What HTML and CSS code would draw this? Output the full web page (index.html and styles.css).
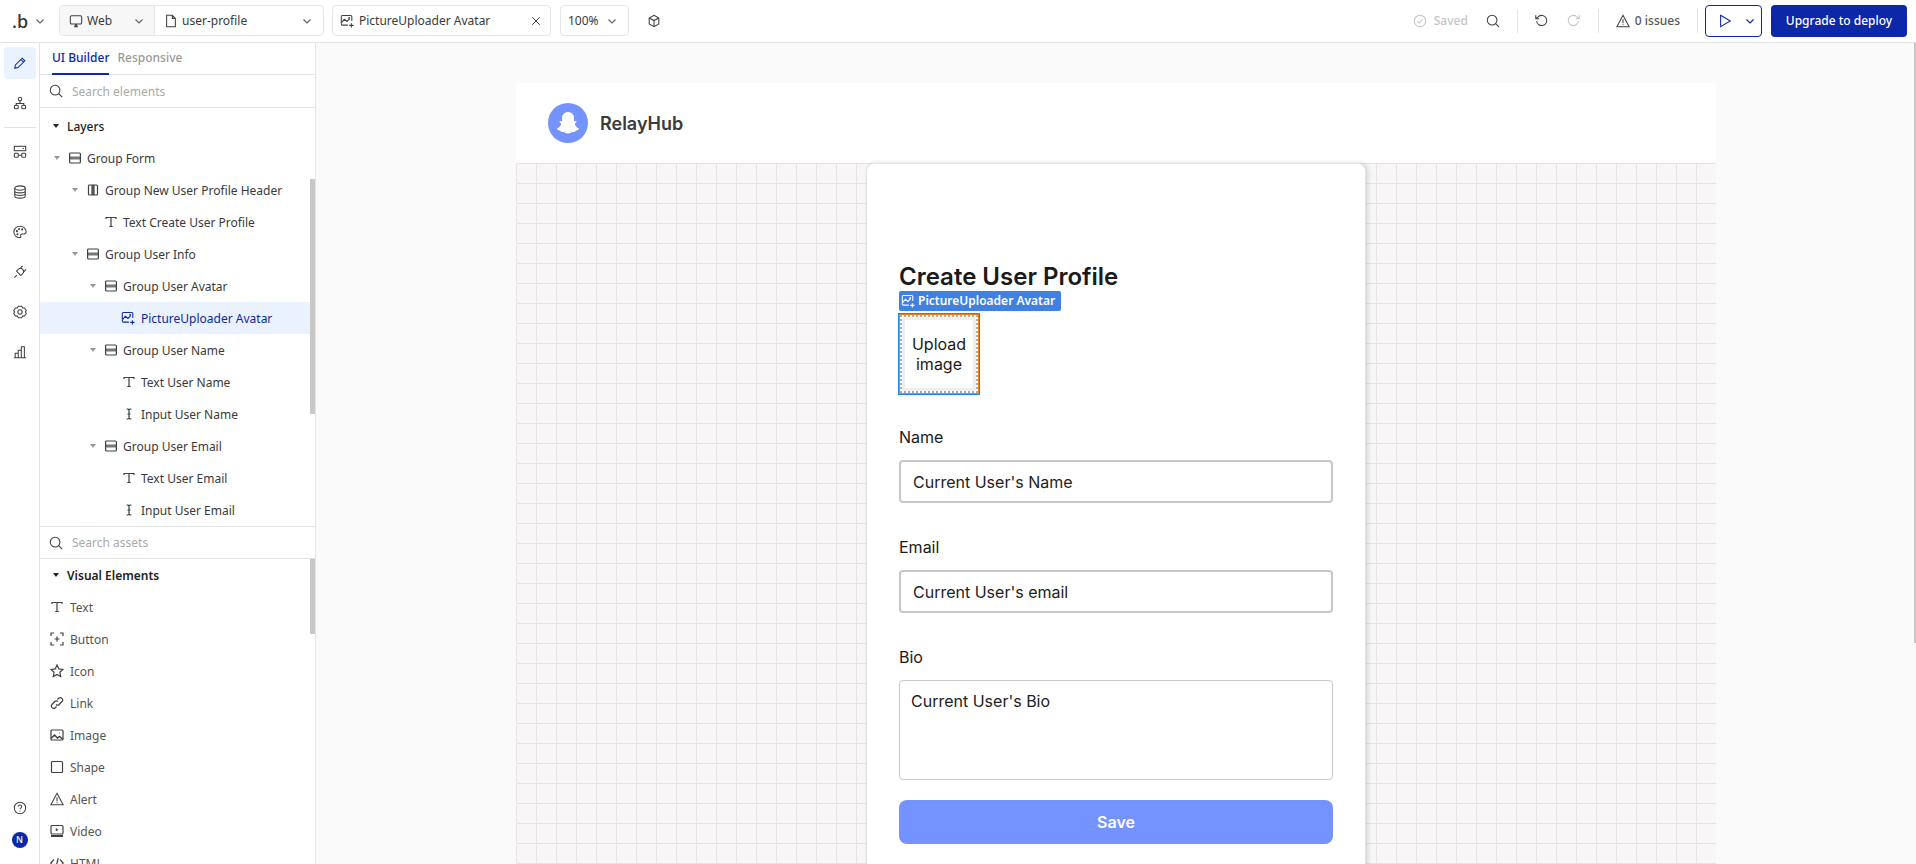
FILE: index.html
```html
<!DOCTYPE html>
<html lang="en">
<head>
  <meta charset="UTF-8" />
  <title>user-profile</title>
  <link rel="stylesheet" href="styles.css">
</head>
<body>
  <svg class="defs" width="0" height="0">
    <symbol id="i-chev" viewBox="0 0 10 10"><path d="M1.5 3.5 5 7l3.5-3.5" /></symbol>
    <symbol id="i-x" viewBox="0 0 12 12"><path d="M1.5 1.5l9 9M10.5 1.5l-9 9" /></symbol>
    <symbol id="i-monitor" viewBox="0 0 16 16"><rect x="1.5" y="2" width="13" height="9.5" rx="1.5" /><path d="M6 14h4M8 11.5V14" stroke-width="2" /></symbol>
    <symbol id="i-file" viewBox="0 0 16 16"><path d="M3 1.5h6.5L13 5v9.5H3zM9.5 1.500V5H13" /></symbol>
    <symbol id="i-upl" viewBox="0 0 16 16"><path d="M13.5 8V3a1.2 1.2 0 0 0-1.2-1.2H2.700A1.2 1.2 0 0 0 1.500 3v8.500a1.200 1.200 0 0 0 1.200 1.200H9" /><path d="M2 9.5l3-3.5 3 2.5 3-3" /><circle cx="10.5" cy="4.5" r=".5" /><path d="M13 10.5v5M10.5 13h5" /></symbol>
    <symbol id="i-cube" viewBox="0 0 16 16"><path d="M8 1.5l5.5 3v7L8 14.5l-5.5-3v-7zM2.500 4.500 8 7.500l5.500-3M8 7.500v7" /></symbol>
    <symbol id="i-search" viewBox="0 0 16 16"><circle cx="7" cy="7" r="5.5" /><path d="M11 11l4 4" /></symbol>
    <symbol id="i-check" viewBox="0 0 16 16"><circle cx="8" cy="8" r="6.5" /><path d="M5 8.2l2.2 2.2L11 6" /></symbol>
    <symbol id="i-undo" viewBox="0 0 16 16"><path d="M3 8a5.8 5.8 0 1 0 2-5L2 5.500M2 1.500v4h4" /></symbol>
    <symbol id="i-redo" viewBox="0 0 16 16"><path d="M13 8a5.8 5.8 0 1 1-2-5l3 2.500M14 1.500v4h-4" /></symbol>
    <symbol id="i-warn" viewBox="0 0 16 16"><path d="M8 1.5 15 14.500H1zM8 6v4.500M8 11.700v1.200" /></symbol>
    <symbol id="i-play" viewBox="0 0 16 16"><path d="M3 1.5 14 8 3 14.500z" /></symbol>
    <symbol id="i-pen" viewBox="0 0 16 16"><path d="M2 14l.8-3.800L10.500 2.500l3 3-7.700 7.700zM9 4l3 3" /></symbol>
    <symbol id="i-tree" viewBox="0 0 16 16"><circle cx="8" cy="3.5" r="2" /><rect x="1.5" y="10.5" width="4.5" height="4" rx="1.5" /><rect x="10" y="10.5" width="4.5" height="4" rx="1.5" /><path d="M8 5.500v3M3.700 10.500V8.500h8.600v2" /></symbol>
    <symbol id="i-layout" viewBox="0 0 16 16"><rect x="1.5" y="1.5" width="13" height="5" /><path d="M11 4h1.500" /><rect x="1.5" y="9.5" width="4.5" height="4.5" rx="1" /><rect x="10" y="9.5" width="4.5" height="4.5" rx="1" /><path d="M6 11.700h4" /></symbol>
    <symbol id="i-db" viewBox="0 0 16 16"><ellipse cx="8" cy="3.5" rx="6" ry="2.5" /><path d="M2 3.500v9C2 14 4.700 15 8 15s6-1 6-2.500v-9M2 6.500C2 8 4.700 9 8 9s6-1 6-2.500M2 9.500C2 11 4.700 12 8 12s6-1 6-2.500" /></symbol>
    <symbol id="i-palette" viewBox="0 0 16 16"><path d="M8 1.5C4 1.500 1 4.300 1 8s3 6.500 6.500 6.500c1.500 0 1.800-1 1.300-2-.5-1.200.2-2.200 1.500-2.200h2.200c1.500 0 2.500-1 2.500-2.500C15 4.300 12 1.500 8 1.500z" /><circle cx="4.5" cy="7" r=".6" /><circle cx="7" cy="4.5" r=".6" /><circle cx="10.5" cy="5" r=".6" /><circle cx="5" cy="10.5" r=".6" /></symbol>
    <symbol id="i-plug" viewBox="0 0 16 16"><path d="M1.5 14.500l3-3M4 7l5 5 2-2c1.500-1.500 1.500-3.500 0-5s-3.500-1.500-5 0zM8.500 3.500 11 1M12.500 7.500 15 5" /></symbol>
    <symbol id="i-gear" viewBox="0 0 16 16"><path d="M6 1.500h4l1 1.800 2.200.1 2 3.100L14.100 8l1.100 1.500-2 3.100-2.200.1-1 1.800H6l-1-1.800-2.200-.1-2-3.100L1.900 8 .8 6.500l2-3.100 2.200-.1z" /><circle cx="8" cy="8" r="2.5" /></symbol>
    <symbol id="i-chart" viewBox="0 0 16 16"><path d="M1 14.500h14M2.500 14.500V9.500H6v5M6 14.500V6h3.500v8.500M9.500 14.500V2H13v12.500" /></symbol>
    <symbol id="i-help" viewBox="0 0 16 16"><circle cx="8" cy="8" r="6.5" /><path d="M6 6.300C6 5 7 4.500 8 4.500s2 .7 2 1.800c0 1.500-2 1.500-2 3.200M8 11v1" /></symbol>
    <symbol id="i-stack" viewBox="0 0 12 12"><rect class="fill-soft" x="1" y="4.500" width="10" height="3" /><rect x=".6" y="1" width="10.800" height="10" rx="1" /></symbol>
    <symbol id="i-cols" viewBox="0 0 12 12"><rect class="fill-soft" x="5" y="1" width="2" height="10" /><rect x="1.5" y="1" width="9" height="10" rx="1" /><path d="M5 1v10M7 1v10" /></symbol>
    <symbol id="i-text" viewBox="0 0 12 12"><path d="M1 3V1.500h10V3M6 1.500v9M4.300 10.500h3.400" /></symbol>
    <symbol id="i-input" viewBox="0 0 12 12"><path d="M3.500 1H5l1 1 1-1h1.500M3.500 11H5l1-1 1 1h1.500M6 2v8M4.500 6h3" /></symbol>
    <symbol id="i-btn" viewBox="0 0 14 14"><path d="M1 4V1h3M10 1h3v3M13 10v3h-3M4 13H1v-3M7 4.500v5M4.500 7h5" /></symbol>
    <symbol id="i-star" viewBox="0 0 14 14"><path d="M7 1l1.800 3.900 4.200.5-3.100 2.900.8 4.200L7 10.400l-3.700 2.100.8-4.200L1 5.400l4.200-.5z" /></symbol>
    <symbol id="i-link" viewBox="0 0 14 14"><path d="M6 8.500a2.200 2.200 0 0 0 3.200 0l2.800-3a2.300 2.300 0 0 0-3.300-3.200L7.500 3.500M8 5.500a2.200 2.200 0 0 0-3.200 0l-2.800 3a2.300 2.300 0 0 0 3.300 3.200l1.200-1.200" /></symbol>
    <symbol id="i-image" viewBox="0 0 14 14"><rect x="1" y="2" width="12" height="10" rx="1" /><path d="M1 10.500l3.500-3.500 3 3 2-1.500 3.500 3M9.500 5h.5" stroke-width="1.500" /></symbol>
    <symbol id="i-shape" viewBox="0 0 14 14"><rect x="1.5" y="1.5" width="11" height="11" rx="1" /></symbol>
    <symbol id="i-video" viewBox="0 0 14 14"><rect x="1" y="1.5" width="12" height="8.5" rx="1" /><path d="M1 12h12" stroke-width="2" /><path class="fill-ink" d="M5.800 4l2.700 1.700-2.700 1.700z" /></symbol>
    <symbol id="i-code" viewBox="0 0 14 14"><path d="M4 3.500.8 7 4 10.500M10 3.500 13.200 7 10 10.500M8.200 2 5.800 12" /></symbol>
  </svg>

  <header class="topbar">
    <div class="brand"><span class="brand-mark">.b</span><svg class="ico chev"><use href="#i-chev" /></svg></div>
    <div class="box page-picker">
      <div class="device"><svg class="ico i14"><use href="#i-monitor" /></svg><span>Web</span><svg class="ico chev push"><use href="#i-chev" /></svg></div>
      <div class="page-name"><svg class="ico i14"><use href="#i-file" /></svg><span>user-profile</span><svg class="ico chev push"><use href="#i-chev" /></svg></div>
    </div>
    <div class="box element-picker"><svg class="ico i14"><use href="#i-upl" /></svg><span>PictureUploader Avatar</span><svg class="ico i10 push"><use href="#i-x" /></svg></div>
    <div class="box zoom-picker"><span>100%</span><svg class="ico chev push"><use href="#i-chev" /></svg></div>
    <svg class="ico i14 cube"><use href="#i-cube" /></svg>

    <div class="top-right">
      <svg class="ico i14 muted"><use href="#i-check" /></svg>
      <span class="saved">Saved</span>
      <svg class="ico i14 top-search"><use href="#i-search" /></svg>
      <i class="vline first"></i>
      <svg class="ico i14"><use href="#i-undo" /></svg>
      <svg class="ico i14 muted redo"><use href="#i-redo" /></svg>
      <i class="vline"></i>
      <svg class="ico i14"><use href="#i-warn" /></svg>
      <span class="issues">0 issues</span>
      <i class="vline"></i>
      <div class="run"><svg class="ico i14"><use href="#i-play" /></svg><svg class="ico chev"><use href="#i-chev" /></svg></div>
      <button class="deploy">Upgrade to deploy</button>
    </div>
  </header>

  <div class="editor">
    <nav class="rail">
      <div class="rail-item active"><svg class="ico i14"><use href="#i-pen" /></svg></div>
      <div class="rail-item"><svg class="ico i14"><use href="#i-tree" /></svg></div>
      <hr class="rail-sep">
      <div class="rail-item tight"><svg class="ico i14"><use href="#i-layout" /></svg></div>
      <div class="rail-item tight"><svg class="ico i14"><use href="#i-db" /></svg></div>
      <div class="rail-item tight"><svg class="ico i14"><use href="#i-palette" /></svg></div>
      <div class="rail-item tight"><svg class="ico i14"><use href="#i-plug" /></svg></div>
      <div class="rail-item tight"><svg class="ico i14"><use href="#i-gear" /></svg></div>
      <div class="rail-item tight"><svg class="ico i14"><use href="#i-chart" /></svg></div>
      <div class="rail-bottom">
        <svg class="ico i14"><use href="#i-help" /></svg>
        <span class="avatar">N</span>
      </div>
    </nav>

    <aside class="panel">
      <div class="tabs">
        <span class="tab on">UI Builder</span>
        <span class="tab">Responsive</span>
      </div>
      <div class="search"><svg class="ico i14"><use href="#i-search" /></svg><span>Search elements</span></div>

      <div class="layers">
        <div class="thumb thumb-layers"></div>
        <div class="row head"><i class="caret dark"></i>Layers</div>
        <div class="row d0"><i class="caret"></i><svg class="ico i12"><use href="#i-stack" /></svg>Group Form</div>
        <div class="row d1"><i class="caret"></i><svg class="ico i12"><use href="#i-cols" /></svg>Group New User Profile Header</div>
        <div class="row d2"><i class="caret none"></i><svg class="ico i12"><use href="#i-text" /></svg>Text Create User Profile</div>
        <div class="row d1"><i class="caret"></i><svg class="ico i12"><use href="#i-stack" /></svg>Group User Info</div>
        <div class="row d2"><i class="caret"></i><svg class="ico i12"><use href="#i-stack" /></svg>Group User Avatar</div>
        <div class="row d3 selected"><i class="caret none"></i><svg class="ico i14"><use href="#i-upl" /></svg>PictureUploader Avatar</div>
        <div class="row d2"><i class="caret"></i><svg class="ico i12"><use href="#i-stack" /></svg>Group User Name</div>
        <div class="row d3"><i class="caret none"></i><svg class="ico i12"><use href="#i-text" /></svg>Text User Name</div>
        <div class="row d3"><i class="caret none"></i><svg class="ico i12"><use href="#i-input" /></svg>Input User Name</div>
        <div class="row d2"><i class="caret"></i><svg class="ico i12"><use href="#i-stack" /></svg>Group User Email</div>
        <div class="row d3"><i class="caret none"></i><svg class="ico i12"><use href="#i-text" /></svg>Text User Email</div>
        <div class="row d3"><i class="caret none"></i><svg class="ico i12"><use href="#i-input" /></svg>Input User Email</div>
      </div>

      <div class="search assets-search"><svg class="ico i14"><use href="#i-search" /></svg><span>Search assets</span></div>

      <div class="assets">
        <div class="thumb thumb-assets"></div>
        <div class="row head strong"><i class="caret dark"></i>Visual Elements</div>
        <div class="asset"><svg class="ico i12"><use href="#i-text" /></svg>Text</div>
        <div class="asset"><svg class="ico i14"><use href="#i-btn" /></svg>Button</div>
        <div class="asset"><svg class="ico i14"><use href="#i-star" /></svg>Icon</div>
        <div class="asset"><svg class="ico i14"><use href="#i-link" /></svg>Link</div>
        <div class="asset"><svg class="ico i14"><use href="#i-image" /></svg>Image</div>
        <div class="asset"><svg class="ico i14"><use href="#i-shape" /></svg>Shape</div>
        <div class="asset"><svg class="ico i14"><use href="#i-warn" /></svg>Alert</div>
        <div class="asset"><svg class="ico i14"><use href="#i-video" /></svg>Video</div>
        <div class="asset"><svg class="ico i14"><use href="#i-code" /></svg>HTML</div>
      </div>
    </aside>

    <main class="canvas">
      <div class="canvas-thumb"></div>
      <div class="app">
        <div class="app-header">
          <svg class="logo" viewBox="0 0 40 40">
            <circle cx="20" cy="20" r="20" fill="#7593ff" />
            <path fill="#fff" d="M20 9C24 9 26 12 26 15L26 18C27 18.5 28 18 28.5 18.5C29 19.5 27 20 26.8 20.8C27 22.5 29 25 31 25.500C31 27 29 27.5 27.5 27.7C27 29 26.5 29 25 29C23 29 22.5 30.5 20 30.5C17.5 30.5 17 29 15 29C13.5 29 13 29 12.5 27.7C11 27.5 9 27 9 25.5C11 25 13 22.5 13.2 20.8C13 20 11 19.5 11.5 18.5C12 18 13 18.5 14 18L14 15C14 12 16 9 20 9Z" />
          </svg>
          <span class="app-name">RelayHub</span>
        </div>
        <div class="app-body">
          <form class="card">
            <h1 class="card-title">Create User Profile</h1>
            <div class="uploader">
              <div class="uploader-tag"><svg class="ico i14"><use href="#i-upl" /></svg>PictureUploader Avatar</div>
              <div class="uploader-inner">Upload image</div>
            </div>
            <label class="field-label" for="userName">Name</label>
            <input class="field" id="userName" type="text" value="Current User's Name" />
            <label class="field-label" for="userEmail">Email</label>
            <input class="field" id="userEmail" type="text" value="Current User's email" />
            <label class="field-label" for="userBio">Bio</label>
            <textarea class="field-area" id="userBio">Current User's Bio</textarea>
            <button class="save" type="button">Save</button>
          </form>
        </div>
      </div>
    </main>
  </div>
</body>
</html>
```

FILE: styles.css
```css
* {
  box-sizing: border-box;
}

html, body {
  height: 100%;
}

body {
  margin: 0;
  overflow: hidden;
  display: flex;
  flex-direction: column;
  font-family: "Noto Sans", sans-serif;
  font-size: 12px;
  color: #3a3a3a;
  background-color: #fff;
}

.defs {
  position: absolute;
}

/* icons */
.ico {
  flex: none;
  fill: none;
  stroke: #404040;
  stroke-width: 1.2;
}

.i10 { width: 10px; height: 10px; }
.i12 { width: 12px; height: 12px; }
.i14 { width: 14px; height: 14px; }
.chev { width: 10px; height: 10px; stroke: #666; }
.muted { stroke: #c4c4c4; }
.fill-soft { fill: #777; stroke: none; }
.fill-ink { fill: #4a4a4a; stroke: none; }
.push { margin-left: auto; }

/* top bar */
.topbar {
  flex: none;
  height: 43px;
  display: flex;
  align-items: center;
  border-bottom: 1px solid #e3e3e3;
  padding-bottom: 1px;
}

.brand {
  width: 59px;
  display: flex;
  align-items: center;
  padding-left: 12px;
}

.brand-mark {
  width: 23px;
  font-size: 18px;
  line-height: 20px;
  font-weight: 500;
  color: #333;
}

.box {
  height: 31px;
  display: flex;
  align-items: center;
  border: 1px solid #e6e6e6;
  border-radius: 4px;
  font-size: 12px;
}

.page-picker {
  width: 265px;
}

.device {
  width: 95px;
  height: 100%;
  display: flex;
  align-items: center;
  gap: 4px;
  padding: 0 10px 0 9px;
  background-color: #f7f7f7;
  border-right: 1px solid #e6e6e6;
  border-radius: 4px 0 0 4px;
}

.page-name {
  flex: 1;
  display: flex;
  align-items: center;
  gap: 4px;
  padding: 0 11px 0 9px;
}

.element-picker {
  width: 219px;
  margin-left: 8px;
  gap: 5px;
  padding: 0 9px 0 7px;
}

.zoom-picker {
  width: 69px;
  margin-left: 9px;
  padding: 0 11px 0 7px;
}

.cube {
  margin-left: 18px;
}

.top-right {
  margin-left: auto;
  display: flex;
  align-items: center;
  padding-right: 9px;
}

.saved {
  margin-left: 7px;
  color: #c4c4c4;
  font-weight: 500;
}

.top-search {
  margin-left: 18px;
}

.vline {
  width: 1px;
  height: 24px;
  margin: 0 17px;
  background-color: #e3e3e3;
}

.vline.first {
  margin-right: 16px;
}

.redo {
  margin-left: 19px;
}

.issues {
  margin-left: 5px;
  font-weight: 500;
  color: #555;
}

.run {
  width: 57px;
  height: 32px;
  margin-left: -10px;
  display: flex;
  align-items: center;
  gap: 13px;
  padding-left: 12px;
  border: 1px solid #0c27a8;
  border-radius: 4px;
}

.run .ico {
  stroke: #0c27a8;
}

.deploy {
  width: 136px;
  height: 32px;
  margin-left: 9px;
  border: none;
  border-radius: 4px;
  background-color: #0c27a8;
  color: #fff;
  font-family: inherit;
  font-size: 12px;
  font-weight: 500;
}

/* editor */
.editor {
  flex: 1;
  display: flex;
  min-height: 0;
}

.rail {
  width: 40px;
  flex: none;
  display: flex;
  flex-direction: column;
  align-items: center;
  padding-top: 4px;
  border-right: 1px solid #e3e3e3;
}

.rail-item {
  width: 32px;
  height: 32px;
  margin-bottom: 8px;
  display: flex;
  align-items: center;
  justify-content: center;
  border-radius: 4px;
}

.rail-item.tight {
  height: 40px;
  margin-bottom: 0;
}

.rail-item.active {
  background-color: #ebf2ff;
}

.rail-item.active .ico {
  stroke: #0c27a8;
}

.rail-sep {
  width: 32px;
  margin: 0 0 4px;
  border: none;
  border-top: 1px solid #e3e3e3;
}

.rail-bottom {
  margin-top: auto;
  margin-bottom: 16px;
  display: flex;
  flex-direction: column;
  align-items: center;
  gap: 17px;
}

.avatar {
  width: 16px;
  height: 16px;
  border-radius: 50%;
  background-color: #0c27a8;
  color: #fff;
  font-size: 9px;
  font-weight: 500;
  line-height: 16px;
  text-align: center;
}

/* left panel */
.panel {
  width: 276px;
  flex: none;
  display: flex;
  flex-direction: column;
  border-right: 1px solid #e3e3e3;
}

.tabs {
  height: 32px;
  flex: none;
  display: flex;
  gap: 8px;
  padding-left: 12px;
  border-bottom: 1px solid #e3e3e3;
}

.tab {
  height: 32px;
  line-height: 29px;
  color: #999;
  font-weight: 500;
}

.tab.on {
  color: #0c27a8;
  border-bottom: 2px solid #0c27a8;
}

.search {
  height: 33px;
  flex: none;
  display: flex;
  align-items: center;
  gap: 9px;
  padding-left: 9px;
  color: #aaa;
  border-bottom: 1px solid #e3e3e3;
}

.assets-search {
  border-top: 1px solid #e3e3e3;
}

.layers {
  position: relative;
  flex: none;
  height: 418px;
  padding-top: 2px;
  overflow: hidden;
}

.assets {
  position: relative;
  flex: 1;
  min-height: 0;
  overflow: hidden;
}

.thumb {
  position: absolute;
  right: 0;
  width: 5px;
  background-color: #c8c8c8;
}

.thumb-layers {
  top: 71px;
  height: 235px;
}

.thumb-assets {
  top: 0;
  height: 75px;
}

.row {
  height: 32px;
  display: flex;
  align-items: center;
  white-space: nowrap;
}

.row .ico {
  margin-right: 6px;
}

.row .i14 {
  margin-right: 6px;
  margin-left: -2px;
}

.head {
  padding-left: 13px;
  font-weight: 500;
  color: #222;
}

.head .caret {
  margin-right: 8px;
}

.strong {
  font-weight: 600;
  padding-left: 13px;
}

.d0 { padding-left: 14px; }
.d1 { padding-left: 32px; }
.d2 { padding-left: 50px; }
.d3 { padding-left: 68px; }

.selected {
  color: #0c27a8;
  background-color: #ebf2ff;
}

.selected .ico {
  stroke: #0c27a8;
}

.caret {
  flex: none;
  width: 6px;
  height: 0;
  margin-right: 9px;
  border-left: 3px solid transparent;
  border-right: 3px solid transparent;
  border-top: 4px solid #999;
}

.caret.dark {
  border-top-color: #222;
}

.caret.none {
  border-color: transparent;
}

.asset {
  height: 32px;
  display: flex;
  align-items: center;
  gap: 6px;
  padding-left: 10px;
  color: #555;
}

.asset .i12 {
  margin: 0 1px;
}

/* canvas and page being edited */
.canvas {
  position: relative;
  flex: 1;
  min-width: 0;
  padding: 40px 0 0 200px;
  background-color: #fafafa;
  overflow: hidden;
}

.canvas-thumb {
  position: absolute;
  top: 0;
  right: 0;
  width: 2px;
  height: 600px;
  background-color: #c8c8c8;
}

.app {
  width: 1200px;
  font-family: Inter, sans-serif;
  color: #1a1a1a;
}

.app-header {
  height: 80px;
  display: flex;
  align-items: center;
  gap: 12px;
  padding-left: 32px;
  background-color: #fff;
}

.logo {
  width: 40px;
  height: 40px;
}

.app-name {
  font-size: 18px;
  font-weight: 600;
  color: #3a3a3a;
}

.app-body {
  display: flex;
  justify-content: center;
  background-color: #f8f6f7;
  background-image:
    linear-gradient(#e5e3e4 1px, transparent 1px),
    linear-gradient(90deg, #e5e3e4 1px, transparent 1px);
  background-size: 20px 20px;
}

.card {
  width: 500px;
  padding: 97px 32px 40px;
  display: flex;
  flex-direction: column;
  background-color: #fff;
  border: 1px solid #e3e3e3;
  border-bottom: none;
  border-radius: 8px 8px 0 0;
  box-shadow: 2px 0 5px rgba(0, 0, 0, 0.14);
}

.card-title {
  margin: 0 0 21px;
  font-size: 24px;
  line-height: 32px;
  font-weight: 600;
  color: #1a1a1a;
}

.uploader {
  position: relative;
  width: 80px;
  height: 80px;
  margin-bottom: 33px;
  border: 1px solid #e8861a;
  outline: 1px solid #1e88e5;
  font-size: 16px;
  line-height: 20px;
  text-align: center;
}

.uploader-tag {
  position: absolute;
  left: -1px;
  bottom: 82px;
  width: 162px;
  height: 20px;
  display: flex;
  align-items: center;
  gap: 3px;
  padding-left: 2px;
  border-radius: 2px;
  background-color: #4080e0;
  color: #fff;
  font-family: "Noto Sans", sans-serif;
  font-size: 12px;
  font-weight: 600;
  white-space: nowrap;
}

.uploader-tag .ico {
  stroke: #fff;
}

.uploader-inner {
  height: 100%;
  display: flex;
  align-items: center;
  padding: 0 7px;
  background-color: #fff;
  border: 2px dotted #aaa;
  box-shadow: inset 0 0 0 3px #eee;
}

.field-label {
  font-size: 16px;
  line-height: 20px;
  margin-bottom: 13px;
}

.field {
  height: 43px;
  margin-bottom: 34px;
  padding: 0 12px;
  border: 2px solid #c8c8c8;
  border-radius: 4px;
  font-family: inherit;
  font-size: 16px;
  color: #222;
}

.field-area {
  height: 100px;
  margin-bottom: 20px;
  padding: 10px 11px;
  border: 1px solid #c8c8c8;
  border-radius: 4px;
  font-family: inherit;
  font-size: 16px;
  line-height: 20px;
  color: #222;
  resize: none;
}

.save {
  height: 44px;
  border: none;
  border-radius: 8px;
  background-color: #7593ff;
  color: #fff;
  font-family: inherit;
  font-size: 16px;
  font-weight: 600;
}
```
